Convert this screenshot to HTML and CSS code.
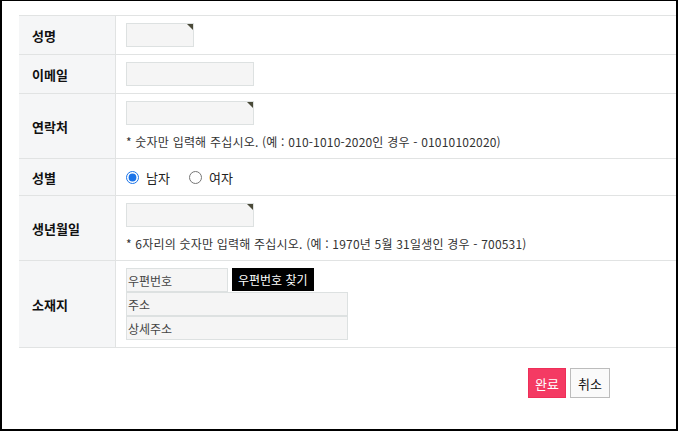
FILE: index.html
```html
<!DOCTYPE html>
<html lang="ko">
<head>
    <meta charset="UTF-8">
    <meta name="viewport" content="width=device-width, initial-scale=1.0">
    <title>회원정보</title>
    <link rel="stylesheet" href="styles.css">
</head>
<body>
    <div class="frame">
        <table class="form-table">
            <tr>
                <th>성명</th>
                <td><span class="field req"><input type="text" class="input small"></span></td>
            </tr>
            <tr>
                <th>이메일</th>
                <td><span class="field"><input type="text" class="input"></span></td>
            </tr>
            <tr>
                <th>연락처</th>
                <td>
                    <span class="field req"><input type="text" class="input"></span>
                    <p class="help">* 숫자만 입력해 주십시오. (예 : 010-1010-2020인 경우 - 01010102020)</p>
                </td>
            </tr>
            <tr>
                <th>성별</th>
                <td class="radios">
                    <label><input type="radio" name="sex" checked><span>남자</span></label><label><input type="radio" name="sex"><span>여자</span></label>
                </td>
            </tr>
            <tr>
                <th>생년월일</th>
                <td>
                    <span class="field req"><input type="text" class="input"></span>
                    <p class="help">* 6자리의 숫자만 입력해 주십시오. (예 : 1970년 5월 31일생인 경우 - 700531)</p>
                </td>
            </tr>
            <tr>
                <th>소재지</th>
                <td>
                    <div class="zip-row">
                        <input type="text" class="input zip" placeholder="우편번호">
                        <button class="zip-btn">우편번호 찾기</button>
                    </div>
                    <input type="text" class="input addr" placeholder="주소">
                    <input type="text" class="input addr" placeholder="상세주소">
                </td>
            </tr>
        </table>

        <div class="actions">
            <button class="btn ok">완료</button>
            <button class="btn cancel">취소</button>
        </div>
    </div>
</body>
</html>
```

FILE: styles.css
```css
body {
    margin: 0;
    font-family: "Noto Sans CJK KR", "Liberation Sans", sans-serif;
    color: #222;
}

.frame {
    box-sizing: border-box;
    width: 678px;
    height: 431px;
    border: 2px solid #000;
    border-top-width: 1px;
    padding: 14px 0 0 17px;
    overflow: hidden;
}

/* form table */
.form-table {
    width: 100%;
    border-collapse: collapse;
    border-top: 1px solid #e1e3e3;
}

.form-table th,
.form-table td {
    border-bottom: 1px solid #e1e3e3;
    padding: 7px 0;
    font-size: 12px;
    vertical-align: middle;
}

.form-table th {
    width: 83px;
    padding-left: 13px;
    text-align: left;
    background-color: #f5f6f7;
    border-right: 1px solid #e1e3e3;
    font-size: 13px;
    font-weight: bold;
    color: #111;
}

.form-table td {
    padding-left: 10px;
}

.field {
    position: relative;
    display: inline-block;
    vertical-align: top;
}

.req::after {
    content: "";
    position: absolute;
    top: 1px;
    right: 1px;
    border-top: 6px solid #4a4a38;
    border-left: 6px solid transparent;
}

.input {
    box-sizing: border-box;
    display: block;
    width: 128px;
    height: 24px;
    margin: 0;
    padding: 0 1px;
    border: 1px solid #dde1e1;
    background-color: #f5f5f5;
    font-family: inherit;
    font-size: 12px;
    color: #333;
    outline: none;
}

.input::placeholder {
    color: #444;
}

.input.small {
    width: 68px;
}

.help {
    margin: 8px 0 0;
    font-size: 12px;
    line-height: 18px;
    letter-spacing: 0.2px;
    color: #333;
}

/* gender */
.radios label {
    display: inline-flex;
    align-items: center;
    gap: 7px;
    width: 63px;
    height: 22px;
    font-size: 13px;
    color: #222;
}

.radios input {
    width: 13px;
    height: 13px;
    margin: 0;
    accent-color: #1a73e8;
}

/* address */
.zip-row {
    display: flex;
    gap: 4px;
}

.input.zip {
    width: 102px;
}

.zip-btn {
    height: 23px;
    padding: 0 6px;
    border: 0;
    background-color: #000;
    color: #fff;
    font-family: inherit;
    font-size: 12px;
}

.input.addr {
    width: 222px;
}

/* buttons */
.actions {
    display: flex;
    justify-content: flex-end;
    gap: 4px;
    margin-top: 20px;
    padding-right: 66px;
}

.btn {
    height: 30px;
    padding: 0 6px;
    font-family: inherit;
    font-size: 13px;
}

.ok {
    width: 38px;
    border: 1px solid #ee2f58;
    background-color: #f43a63;
    color: #fff;
}

.cancel {
    width: 40px;
    border: 1px solid #bcbcbc;
    background-color: #fafafa;
    color: #111;
}
```
